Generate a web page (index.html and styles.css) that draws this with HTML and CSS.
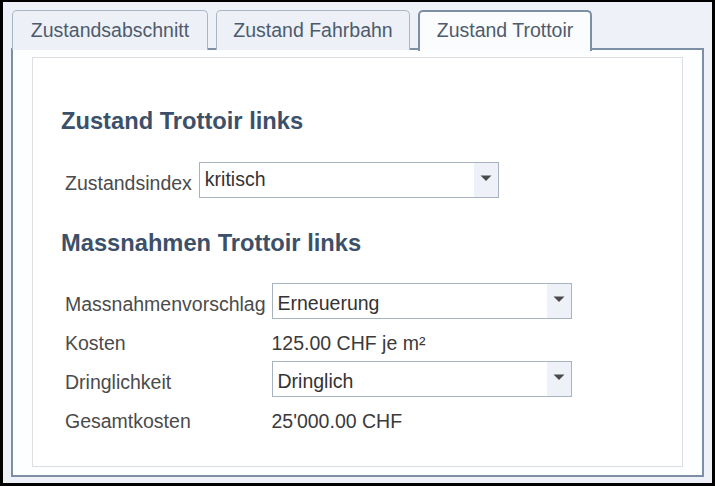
FILE: index.html
```html
<!DOCTYPE html>
<html lang="de">
<head>
<meta charset="utf-8">
<title>Zustand Trottoir</title>
<link rel="stylesheet" href="styles.css">
</head>
<body>
<div class="frame">
  <div class="tabs">
    <div class="tab t1">Zustandsabschnitt</div>
    <div class="tab t2">Zustand Fahrbahn</div>
    <div class="tab t3 active">Zustand Trottoir</div>
  </div>
  <div class="panel">
    <div class="box">
      <h2 class="title first">Zustand Trottoir links</h2>
      <div class="form form-a">
        <div class="label">Zustandsindex</div>
        <div class="cell">
          <div class="select sel-a"><span class="val">kritisch</span><span class="btn"><svg width="12" height="7" viewBox="0 0 12 7"><path d="M0.5 0.5 L11.5 0.5 L6 6 Z" fill="#4a4a4a"/></svg></span></div>
        </div>
      </div>
      <h2 class="title second">Massnahmen Trottoir links</h2>
      <div class="form form-b">
        <div class="label">Massnahmenvorschlag</div>
        <div class="cell">
          <div class="select"><span class="val">Erneuerung</span><span class="btn"><svg width="12" height="7" viewBox="0 0 12 7"><path d="M0.5 0.5 L11.5 0.5 L6 6 Z" fill="#4a4a4a"/></svg></span></div>
        </div>
        <div class="label">Kosten</div>
        <div class="cell text">125.00 CHF je m²</div>
        <div class="label">Dringlichkeit</div>
        <div class="cell">
          <div class="select"><span class="val">Dringlich</span><span class="btn"><svg width="12" height="7" viewBox="0 0 12 7"><path d="M0.5 0.5 L11.5 0.5 L6 6 Z" fill="#4a4a4a"/></svg></span></div>
        </div>
        <div class="label">Gesamtkosten</div>
        <div class="cell text">25'000.00 CHF</div>
      </div>
    </div>
  </div>
</div>
</body>
</html>
```

FILE: styles.css
```css
* { box-sizing: border-box; }

html, body {
  margin: 0;
  padding: 0;
  background: #000;
  height: 486px;
  overflow: hidden;
}

body {
  padding: 2px 3px 3px 3px;
  font-family: "Liberation Sans", Arial, sans-serif;
  font-size: 19.5px;
}

.frame {
  height: 481px;
  background: #eef2f8;
  padding: 8px 8px 6px 8px;
  display: flex;
  flex-direction: column;
}

.tabs {
  display: flex;
  gap: 8px;
  padding-left: 1px;
  height: 38px;
  position: relative;
  z-index: 1;
}

.tab {
  height: 40px;
  line-height: 38px;
  text-align: center;
  color: #4d5b6d;
  background: #edf1f7;
  border: 1px solid #a9b6c6;
  border-bottom: none;
  border-radius: 5px 5px 0 0;
  white-space: nowrap;
}

.t1 { width: 196px; }
.t2 { width: 194px; }
.t3 { width: 174px; }

.tab.active {
  background: #fbfcfe;
  border: 2px solid #7d8fa4;
  border-bottom: none;
  line-height: 36px;
  height: 41px;
}

.panel {
  flex: 1;
  background: #fdfeff;
  border: 2px solid #7d8fa4;
  padding: 7px 19px 8px 19px;
  display: flex;
}

.box {
  flex: 1;
  background: #fff;
  border: 1.5px solid #dcdee2;
  padding: 0 0 0 28px;
}

.title {
  margin: 0;
  font-size: 23.7px;
  line-height: 28px;
  font-weight: bold;
  color: #3c5069;
}

.title.first { margin-top: 49px; }
.title.second { margin-top: 30px; }

.form {
  display: grid;
  grid-template-columns: auto 300px;
  grid-auto-rows: 39px;
  justify-content: start;
  column-gap: 6px;
  padding-left: 4px;
}

.form-a { margin-top: 25px; column-gap: 7px; }
.form-b { margin-top: 24px; }

.label {
  color: #4b4b4b;
  padding-top: 8px;
  line-height: 30px;
  white-space: nowrap;
}

.cell { padding-top: 2px; }

.cell.text {
  padding-top: 8px;
  line-height: 30px;
  color: #3a3a3a;
}

.select {
  height: 36px;
  border: 1.5px solid #a8b3c1;
  background: #fff;
  display: flex;
  color: #333;
}

.select .val {
  flex: 1;
  padding: 5px 0 0 5px;
  line-height: 28px;
}

.sel-a .val { padding-top: 2px; }

.select .btn {
  width: 24px;
  background: #eef2f8;
  display: flex;
  align-items: center;
  justify-content: center;
  padding-bottom: 4px;
}
```
